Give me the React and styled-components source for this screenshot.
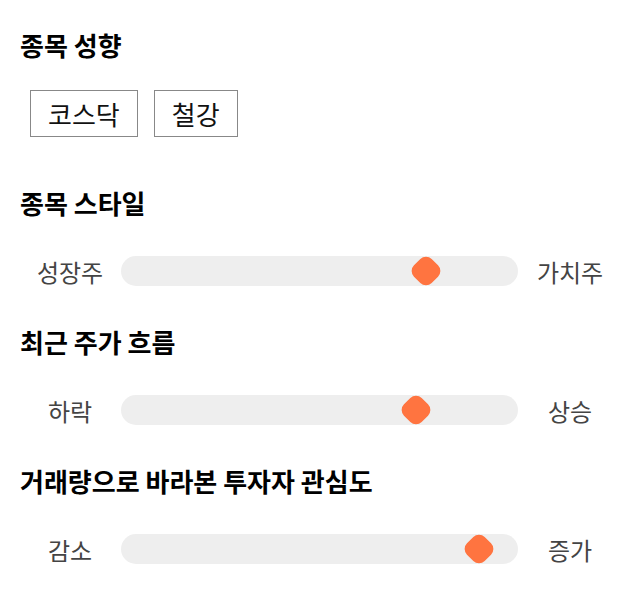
import React from "react";
import styled, { createGlobalStyle } from "styled-components";

const Global = createGlobalStyle`
  html, body { margin: 0; padding: 0; background: #fff; }
  body { font-family: "Noto Sans CJK KR", "Noto Sans", sans-serif; }
`;

const Page = styled.div`
  padding: 30px 20px 20px 20px;
  width: 600px;
`;

const Heading = styled.h2`
  margin: 0;
  font-size: 26px;
  font-weight: 700;
  line-height: 30px;
  color: #000;
`;

const Section = styled.section`
  margin-top: ${(p) => p.$top || 0}px;
`;

const ButtonRow = styled.div`
  display: flex;
  gap: 16px;
  margin-top: 30px;
  padding-left: 10px;
`;

const Chip = styled.button`
  height: 47px;
  padding: 0 17px;
  border: 1px solid #888;
  background: #fff;
  font-family: inherit;
  font-size: 26px;
  line-height: 1;
  color: #111;
  box-sizing: border-box;
`;

const SliderRow = styled.div`
  display: flex;
  align-items: center;
  margin-top: 38px;
  height: 30px;
`;

const SideLabel = styled.span`
  width: 100px;
  text-align: center;
  font-size: 24px;
  color: #444;
  flex: none;
`;

const Track = styled.div`
  position: relative;
  flex: 1;
  height: 30px;
  margin: 0 2px 0 1px;
  background: #eeeeee;
  border-radius: 15px;
`;

const Thumb = styled.div`
  position: absolute;
  top: 50%;
  width: 25px;
  height: 25px;
  background: #ff7440;
  border-radius: 8px;
  transform: translate(-50%, -50%) rotate(45deg);
`;

const sliders = [
  { title: "종목 스타일", left: "성장주", right: "가치주", pos: 305 },
  { title: "최근 주가 흐름", left: "하락", right: "상승", pos: 295 },
  { title: "거래량으로 바라본 투자자 관심도", left: "감소", right: "증가", pos: 358 },
];

function Slider({ left, right, pos }) {
  return (
    <SliderRow>
      <SideLabel>{left}</SideLabel>
      <Track>
        <Thumb style={{ left: `${(pos / 397) * 100}%` }} />
      </Track>
      <SideLabel>{right}</SideLabel>
    </SliderRow>
  );
}

export default function App() {
  return (
    <>
      <Global />
      <Page>
        <Section>
          <Heading>종목 성향</Heading>
          <ButtonRow>
            <Chip>코스닥</Chip>
            <Chip>철강</Chip>
          </ButtonRow>
        </Section>
        {sliders.map((s, i) => (
          <Section key={s.title} $top={i === 0 ? 51 : 41}>
            <Heading>{s.title}</Heading>
            <Slider left={s.left} right={s.right} pos={s.pos} />
          </Section>
        ))}
      </Page>
    </>
  );
}
